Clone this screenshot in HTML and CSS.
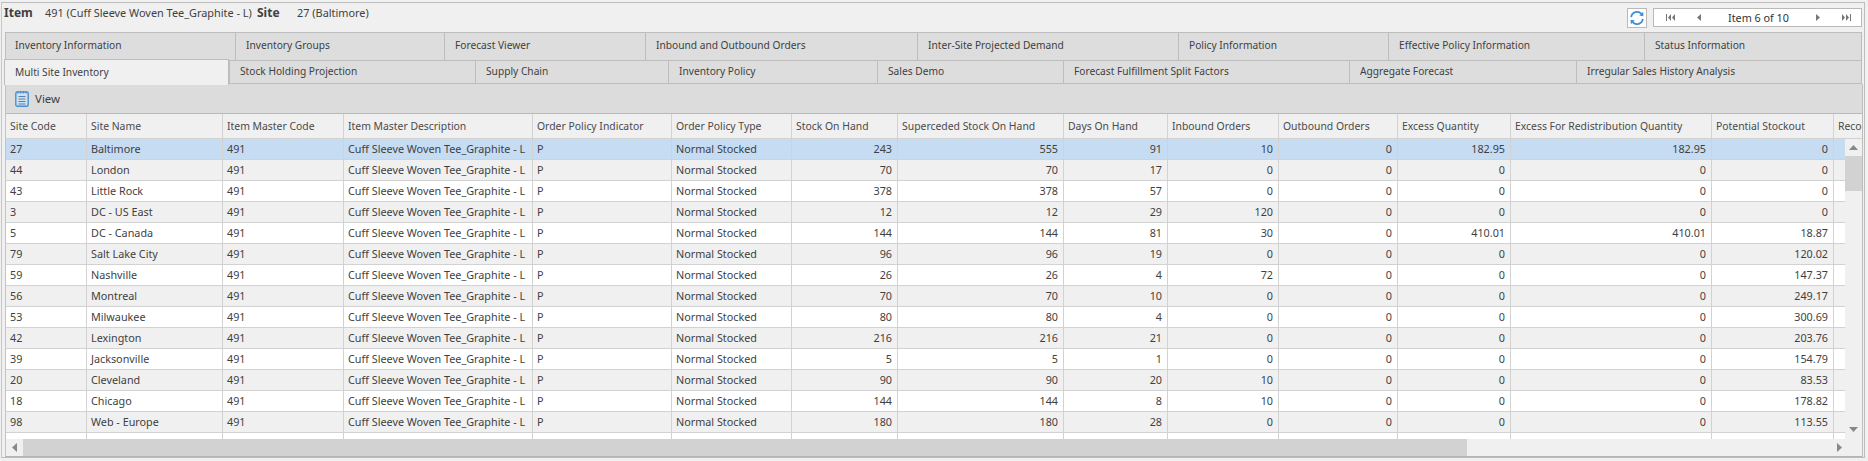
FILE: index.html
```html
<!DOCTYPE html>
<html lang="en">
  <head>
    <meta charset="UTF-8" />
    <title>Multi Site Inventory</title>
    <link rel="stylesheet" href="styles.css">
  </head>
  <body>
    <div class="frame">
      <!-- item / site header -->
      <div class="header">
        <b class="lbl-item">Item</b>
        <span class="val-item">491 (Cuff Sleeve Woven Tee_Graphite - L)</span>
        <b class="lbl-site">Site</b>
        <span class="val-site">27 (Baltimore)</span>
        <button class="refresh" type="button" aria-label="Refresh">
          <svg width="16" height="16" viewBox="0 0 16 16">
            <path d="M2.2 7.2A5.9 5.9 0 0 1 12.4 3.8" fill="none" stroke="#3f8fd2" stroke-width="1.8"/>
            <path d="M13.8 8.8A5.9 5.9 0 0 1 3.6 12.2" fill="none" stroke="#3f8fd2" stroke-width="1.8"/>
            <path d="M10.2 5.6L14.4 6.2L14.2 1.8Z" fill="#3f8fd2"/>
            <path d="M5.8 10.4L1.6 9.8L1.8 14.2Z" fill="#3f8fd2"/>
          </svg>
        </button>
        <div class="navigator">
          <svg width="9" height="7" viewBox="0 0 9 7"><path d="M0 0h1v7H0zM5 0v7L2 3.500zM9 0v7L6 3.500z" fill="#777"/></svg>
          <svg width="4" height="7" viewBox="0 0 4 7"><path d="M4 0v7L0 3.500z" fill="#777"/></svg>
          <span class="nav-text">Item 6 of 10</span>
          <svg width="4" height="7" viewBox="0 0 4 7"><path d="M0 0v7l4-3.500z" fill="#777"/></svg>
          <svg width="9" height="7" viewBox="0 0 9 7"><path d="M8 0h1v7H8zM0 0v7l3-3.500zM4 0v7l3-3.500z" fill="#777"/></svg>
        </div>
      </div>

      <!-- tabs -->
      <div class="tabs tabs-top">
        <div class="tab">Inventory Information</div>
        <div class="tab">Inventory Groups</div>
        <div class="tab">Forecast Viewer</div>
        <div class="tab">Inbound and Outbound Orders</div>
        <div class="tab">Inter-Site Projected Demand</div>
        <div class="tab">Policy Information</div>
        <div class="tab">Effective Policy Information</div>
        <div class="tab">Status Information</div>
      </div>
      <div class="tabs tabs-bottom">
        <div class="tab active">Multi Site Inventory</div>
        <div class="tab">Stock Holding Projection</div>
        <div class="tab">Supply Chain</div>
        <div class="tab">Inventory Policy</div>
        <div class="tab">Sales Demo</div>
        <div class="tab">Forecast Fulfillment Split Factors</div>
        <div class="tab">Aggregate Forecast</div>
        <div class="tab">Irregular Sales History Analysis</div>
      </div>

      <div class="panel">
        <div class="toolbar">
          <svg width="14" height="17" viewBox="0 0 14 17">
            <rect x="0.800" y="2" width="12.400" height="14.200" rx="1.500" fill="#cfe2f4" stroke="#4a90d0" stroke-width="1.400"/>
            <path d="M3 1v2.500M5.700 1v2.500M8.300 1v2.500M11 1v2.500" stroke="#4a90d0" stroke-width="1.200"/>
            <path d="M3.500 6.500h7M3.500 9h7M3.500 11.500h7M3.500 14h7" stroke="#5d7f9f" stroke-width="1"/>
          </svg>
          <span>View</span>
        </div>

        <!-- grid -->
        <div class="row grid-head">
          <div>Site Code</div><div>Site Name</div><div>Item Master Code</div><div>Item Master Description</div><div>Order Policy Indicator</div><div>Order Policy Type</div><div>Stock On Hand</div><div>Superceded Stock On Hand</div><div>Days On Hand</div><div>Inbound Orders</div><div>Outbound Orders</div><div>Excess Quantity</div><div>Excess For Redistribution Quantity</div><div>Potential Stockout</div><div>Recommended</div>
        </div>
        <div class="grid-body">
          <div class="rows">
            <div class="row selected"><div>27</div><div>Baltimore</div><div>491</div><div>Cuff Sleeve Woven Tee_Graphite - L</div><div>P</div><div>Normal Stocked</div><div class="n">243</div><div class="n">555</div><div class="n">91</div><div class="n">10</div><div class="n">0</div><div class="n">182.95</div><div class="n">182.95</div><div class="n">0</div><div></div></div>
            <div class="row alt"><div>44</div><div>London</div><div>491</div><div>Cuff Sleeve Woven Tee_Graphite - L</div><div>P</div><div>Normal Stocked</div><div class="n">70</div><div class="n">70</div><div class="n">17</div><div class="n">0</div><div class="n">0</div><div class="n">0</div><div class="n">0</div><div class="n">0</div><div></div></div>
            <div class="row"><div>43</div><div>Little Rock</div><div>491</div><div>Cuff Sleeve Woven Tee_Graphite - L</div><div>P</div><div>Normal Stocked</div><div class="n">378</div><div class="n">378</div><div class="n">57</div><div class="n">0</div><div class="n">0</div><div class="n">0</div><div class="n">0</div><div class="n">0</div><div></div></div>
            <div class="row alt"><div>3</div><div>DC - US East</div><div>491</div><div>Cuff Sleeve Woven Tee_Graphite - L</div><div>P</div><div>Normal Stocked</div><div class="n">12</div><div class="n">12</div><div class="n">29</div><div class="n">120</div><div class="n">0</div><div class="n">0</div><div class="n">0</div><div class="n">0</div><div></div></div>
            <div class="row"><div>5</div><div>DC - Canada</div><div>491</div><div>Cuff Sleeve Woven Tee_Graphite - L</div><div>P</div><div>Normal Stocked</div><div class="n">144</div><div class="n">144</div><div class="n">81</div><div class="n">30</div><div class="n">0</div><div class="n">410.01</div><div class="n">410.01</div><div class="n">18.87</div><div></div></div>
            <div class="row alt"><div>79</div><div>Salt Lake City</div><div>491</div><div>Cuff Sleeve Woven Tee_Graphite - L</div><div>P</div><div>Normal Stocked</div><div class="n">96</div><div class="n">96</div><div class="n">19</div><div class="n">0</div><div class="n">0</div><div class="n">0</div><div class="n">0</div><div class="n">120.02</div><div></div></div>
            <div class="row"><div>59</div><div>Nashville</div><div>491</div><div>Cuff Sleeve Woven Tee_Graphite - L</div><div>P</div><div>Normal Stocked</div><div class="n">26</div><div class="n">26</div><div class="n">4</div><div class="n">72</div><div class="n">0</div><div class="n">0</div><div class="n">0</div><div class="n">147.37</div><div></div></div>
            <div class="row alt"><div>56</div><div>Montreal</div><div>491</div><div>Cuff Sleeve Woven Tee_Graphite - L</div><div>P</div><div>Normal Stocked</div><div class="n">70</div><div class="n">70</div><div class="n">10</div><div class="n">0</div><div class="n">0</div><div class="n">0</div><div class="n">0</div><div class="n">249.17</div><div></div></div>
            <div class="row"><div>53</div><div>Milwaukee</div><div>491</div><div>Cuff Sleeve Woven Tee_Graphite - L</div><div>P</div><div>Normal Stocked</div><div class="n">80</div><div class="n">80</div><div class="n">4</div><div class="n">0</div><div class="n">0</div><div class="n">0</div><div class="n">0</div><div class="n">300.69</div><div></div></div>
            <div class="row alt"><div>42</div><div>Lexington</div><div>491</div><div>Cuff Sleeve Woven Tee_Graphite - L</div><div>P</div><div>Normal Stocked</div><div class="n">216</div><div class="n">216</div><div class="n">21</div><div class="n">0</div><div class="n">0</div><div class="n">0</div><div class="n">0</div><div class="n">203.76</div><div></div></div>
            <div class="row"><div>39</div><div>Jacksonville</div><div>491</div><div>Cuff Sleeve Woven Tee_Graphite - L</div><div>P</div><div>Normal Stocked</div><div class="n">5</div><div class="n">5</div><div class="n">1</div><div class="n">0</div><div class="n">0</div><div class="n">0</div><div class="n">0</div><div class="n">154.79</div><div></div></div>
            <div class="row alt"><div>20</div><div>Cleveland</div><div>491</div><div>Cuff Sleeve Woven Tee_Graphite - L</div><div>P</div><div>Normal Stocked</div><div class="n">90</div><div class="n">90</div><div class="n">20</div><div class="n">10</div><div class="n">0</div><div class="n">0</div><div class="n">0</div><div class="n">83.53</div><div></div></div>
            <div class="row"><div>18</div><div>Chicago</div><div>491</div><div>Cuff Sleeve Woven Tee_Graphite - L</div><div>P</div><div>Normal Stocked</div><div class="n">144</div><div class="n">144</div><div class="n">8</div><div class="n">10</div><div class="n">0</div><div class="n">0</div><div class="n">0</div><div class="n">178.82</div><div></div></div>
            <div class="row alt"><div>98</div><div>Web - Europe</div><div>491</div><div>Cuff Sleeve Woven Tee_Graphite - L</div><div>P</div><div>Normal Stocked</div><div class="n">180</div><div class="n">180</div><div class="n">28</div><div class="n">0</div><div class="n">0</div><div class="n">0</div><div class="n">0</div><div class="n">113.55</div><div></div></div>
            <div class="row"><div></div><div></div><div>491</div><div>Cuff Sleeve Woven Tee_Graphite - L</div><div>P</div><div>Normal Stocked</div><div></div><div></div><div></div><div></div><div></div><div></div><div></div><div></div><div></div></div>
          </div>
          <div class="vscroll">
            <div class="sb-btn"><svg width="9" height="5" viewBox="0 0 9 5"><path d="M4.500 0L9 5H0z" fill="#888"/></svg></div>
            <div class="vthumb"></div>
            <div class="sb-space"></div>
            <svg class="sb-down" width="9" height="5" viewBox="0 0 9 5"><path d="M0 0h9L4.500 5z" fill="#888"/></svg>
          </div>
        </div>
        <div class="hscroll">
          <div class="sb-btn"><svg width="5" height="9" viewBox="0 0 5 9"><path d="M5 0v9L0 4.500z" fill="#888"/></svg></div>
          <div class="hthumb"></div>
          <svg width="5" height="9" viewBox="0 0 5 9"><path d="M0 0v9l5-4.500z" fill="#888"/></svg>
        </div>
      </div>
    </div>
  </body>
</html>
```

FILE: styles.css
```css
body {
  margin: 0;
  background: #f0f0f0;
  color: #3f3f3f;
  font-family: "Noto Sans", "Liberation Sans", sans-serif;
  font-size: 10.200px;
  overflow: hidden;
}

.frame {
  margin: 2px 3px 0 1px;
  height: 456px;
  border-top: 1px solid #bdbdbd;
  border-left: 1px solid #c8c8c8;
  border-right: 1px solid #bdbdbd;
  border-bottom: 1px solid #bdbdbd;
  box-sizing: border-box;
  padding-left: 2px;
}

/* item / site header */
.header {
  display: flex;
  align-items: center;
  height: 29px;
  padding-right: 2px;
  font-size: 10.900px;
}

.lbl-item,
.val-item,
.lbl-site,
.val-site {
  margin-bottom: 10px;
}

.lbl-item,
.lbl-site {
  font-size: 12px;
}

.lbl-item {
  width: 41px;
}

.val-item {
  width: 212px;
}

.lbl-site {
  width: 40px;
}

.refresh {
  margin-left: auto;
  width: 20px;
  height: 20px;
  padding: 0;
  display: flex;
  align-items: center;
  justify-content: center;
  background: white;
  border: 1px solid #b9b9b9;
}

.navigator {
  display: flex;
  align-items: center;
  justify-content: space-between;
  width: 209px;
  height: 19px;
  margin-left: 6px;
  padding: 0 10px 0 12px;
  box-sizing: border-box;
  background: white;
  border: 1px solid #b9b9b9;
  font-size: 10.800px;
}

.nav-text {
  width: 70px;
  text-align: center;
  color: #333;
}

/* tabs */
.tabs {
  display: grid;
  margin-left: 1px;
}

.tabs-top {
  grid-template-columns: 230px 209px 201px 272px 261px 210px 256px 217px;
  height: 28px;
}

.tabs-bottom {
  grid-template-columns: 224px 246px 193px 209px 186px 286px 227px 285px;
  height: 24px;
}

.tab {
  display: flex;
  align-items: center;
  padding: 0 0 4px 10px;
  background: #dddddd;
  border-top: 1px solid #bdbdbd;
  border-left: 1px solid #bdbdbd;
  border-right: 1px solid #bdbdbd;
  margin-right: -1px;
  box-sizing: border-box;
}

.tabs-top .tab:first-child {
  padding-left: 9px;
}

.tabs-bottom .tab {
  padding-bottom: 2px;
  border-bottom: 1px solid #bdbdbd;
}

.tabs-bottom .tab.active {
  position: relative;
  margin: -1px 0 -1px -1px;
  padding-left: 10px;
  background: #f0f0f0;
  border-bottom: none;
}

/* panel under the tabs */
.panel {
  margin-left: 1px;
  width: 1858px;
  border-right: 1px solid #bdbdbd;
  box-sizing: border-box;
}

.toolbar {
  display: flex;
  align-items: center;
  gap: 6px;
  height: 30px;
  padding-left: 9px;
  background: #dcdcdc;
  box-sizing: border-box;
  border-left: 1px solid #c4c4c4;
  border-bottom: 1px solid #b9b9b9;
  font-size: 11.500px;
}

.row {
  display: grid;
  grid-template-columns: 81px 136px 121px 189px 139px 120px 106px 166px 104px 111px 119px 113px 201px 122px 100px;
  height: 21px;
  box-sizing: border-box;
  background: white;
  border-bottom: 1px solid #d2d2d2;
  overflow: hidden;
  font-size: 10.800px;
}

.row > div {
  padding: 0 5px 0 4px;
  line-height: 20px;
  white-space: nowrap;
  overflow: hidden;
  border-right: 1px solid #d2d2d2;
  box-sizing: border-box;
}

.row > .n {
  text-align: right;
}

.row.alt {
  background: #f0f0f0;
}

.row.selected {
  background: #c5dcf3;
}

.grid-head {
  height: 25px;
  background: #f0f0f0;
  border-left: 1px solid #c4c4c4;
  color: #4a4a4a;
  font-size: 10.400px;
}

.grid-head > div {
  line-height: 24px;
}

.grid-body {
  display: flex;
  height: 300px;
  border-left: 1px solid #c4c4c4;
}

.rows {
  flex: 1;
  min-width: 0;
  overflow: hidden;
}

/* scrollbars */
.vscroll {
  display: flex;
  flex-direction: column;
  align-items: center;
  width: 17px;
  background: #f0f0f0;
}

.vthumb {
  width: 100%;
  height: 35px;
  background: #d2d2d2;
}

.sb-btn {
  display: flex;
  flex: none;
  align-items: center;
  justify-content: center;
  width: 17px;
  height: 17px;
}

.sb-space {
  flex: 1;
}

.sb-down {
  margin-bottom: 7px;
}

.hscroll {
  display: flex;
  align-items: center;
  height: 18px;
  box-sizing: border-box;
  background: #f0f0f0;
  border-left: 1px solid #c4c4c4;
  border-bottom: 1px solid #b4b4b4;
}

.hthumb {
  width: 1444px;
  height: 100%;
  margin-right: 370px;
  background: #d2d2d2;
}
```
